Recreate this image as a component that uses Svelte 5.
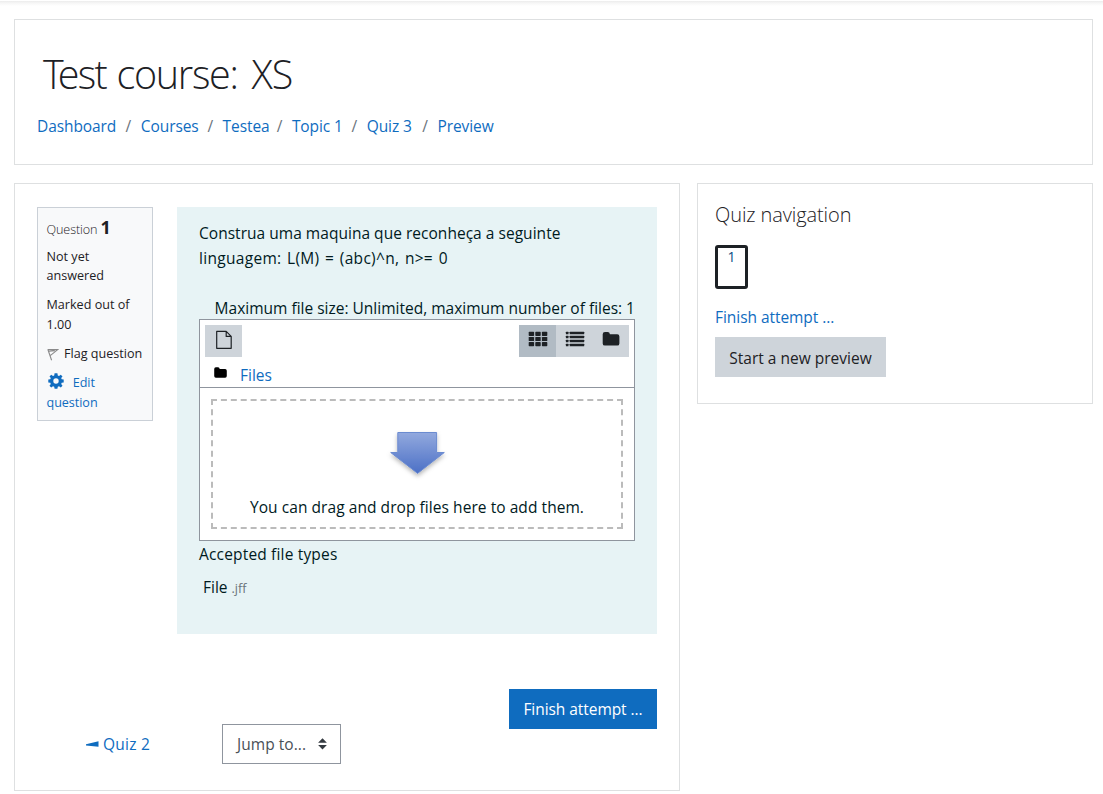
<script>
  const crumbs = [
    { label: 'Dashboard', w: 80 },
    { label: 'Courses', w: 58 },
    { label: 'Testea', w: 45.5 },
    { label: 'Topic 1', w: 51 },
    { label: 'Quiz 3', w: 47 },
    { label: 'Preview', w: 57 }
  ];
</script>

<div class="page">
  <div class="navline"></div>

  <header class="card head">
    <h1><span class="w1"><span class="cap">T</span>est</span> <span class="w2">course:</span> <span>XS</span></h1>
    <nav class="crumbs">
      {#each crumbs as c, i}
        {#if i > 0}<span class="sep">/</span>{/if}
        <a href="#top" style:width="{c.w}px">{c.label}</a>
      {/each}
    </nav>
  </header>

  <div class="cols">
    <main class="card main">
      <div class="que">
        <div class="info">
          <h3>Question <b>1</b></h3>
          <p class="state">Not yet<br />answered</p>
          <p class="grade">Marked out of<br />1.00</p>
          <p class="flag">
            <svg width="12" height="13" viewBox="0 0 12 13" fill="none" stroke="#8a8a8a" stroke-width="1.1">
              <path d="M.8 1.2 4.6 12.3M1 1.5 10.8 1.6 3.2 7.6M2 3.3 7.8 2.6" />
            </svg>
            <span>Flag question</span>
          </p>
          <a class="edit" href="#edit">
            <svg width="16" height="16" viewBox="-8 -8 16 16" fill="#0f6cbf">
              <path fill-rule="evenodd" d="M-1.4-7.7H1.4L1.8-5.6 3-5.1 4.8-6.3 6.5-4.6 5.2-2.9 5.7-1.7 7.7-1.4V1.4L5.7 1.8 5.2 3 6.5 4.8 4.8 6.5 3 5.2 1.8 5.7 1.4 7.7H-1.4L-1.8 5.7-3 5.2-4.8 6.5-6.5 4.8-5.2 3-5.7 1.8-7.7 1.4V-1.4L-5.7-1.7-5.2-2.9-6.5-4.6-4.8-6.3-3-5.1-1.8-5.6ZM0-2.7A2.7 2.7 0 1 0 0 2.7 2.7 2.7 0 1 0 0-2.7Z" />
            </svg>
            <span>Edit</span><br />question
          </a>
        </div>

        <section class="content">
          <p class="l1">Construa uma maquina que reconheça a seguinte</p>
          <p class="l2">linguagem: L(M) = (abc)^n, n&gt;= 0</p>
          <p class="limit">Maximum file size: Unlimited, maximum number of files: 1</p>

          <div class="manager">
            <div class="toolbar">
              <button class="tool" aria-label="Add">
                <svg width="18" height="20" viewBox="0 0 18 20" fill="none" stroke="#1d2125" stroke-width="1.2" stroke-linejoin="round">
                  <path d="M1.7 1.4H11.2L16.2 6.4V18.3H1.7ZM11.2 1.4V6.4H16.2" />
                </svg>
              </button>
              <div class="views">
                <button class="tool on" aria-label="Icons">
                  <svg width="20" height="16" viewBox="0 0 20 16" fill="#1d2125">
                    {#each [0, 1, 2] as r}
                      {#each [0, 1, 2] as c}
                        <rect x={0.7 + c * 6.6} y={0.8 + r * 5.1} width="5.4" height="4.2" rx=".7" />
                      {/each}
                    {/each}
                  </svg>
                </button>
                <button class="tool" aria-label="List">
                  <svg width="20" height="16" viewBox="0 0 20 16" fill="#1d2125">
                    {#each [0, 1, 2, 3] as r}
                      <rect x=".9" y={0.8 + r * 4} width="2.6" height="2.5" rx=".4" />
                      <rect x="4.7" y={0.8 + r * 4} width="14.5" height="2.5" rx=".4" />
                    {/each}
                  </svg>
                </button>
                <button class="tool tree" aria-label="Tree">
                  <svg width="18" height="16" viewBox="0 0 18 16" fill="#1d2125">
                    <path d="M.7 3.2Q.7.9 3 .9H5.6Q7.7.9 7.9 3.2H15.2Q17.4 3.2 17.4 5.4V12.4Q17.4 14.6 15.2 14.6H3Q.7 14.6.7 12.4Z" />
                  </svg>
                </button>
              </div>
            </div>
            <div class="path">
              <svg width="13" height="11" viewBox="0 0 18 15" fill="#000">
                <path d="M.3 2.8Q.3.4 2.6.4H5.6Q7.7.4 7.9 2.8H15.4Q17.7 2.8 17.7 5V12.3Q17.7 14.6 15.4 14.6H2.6Q.3 14.6.3 12.3Z" />
              </svg>
              <a href="#files">Files</a>
            </div>
            <div class="dropwrap">
              <div class="drop">
                <svg width="64" height="52" viewBox="0 0 64 52">
                  <defs>
                    <linearGradient id="arrow" x1="0" y1="0" x2="0" y2="1">
                      <stop offset="0" stop-color="#92a9de" />
                      <stop offset="1" stop-color="#4c70c6" />
                    </linearGradient>
                    <filter id="shade" x="-20%" y="-20%" width="140%" height="150%">
                      <feDropShadow dx="0" dy="2.5" stdDeviation="2" flood-color="#000" flood-opacity=".28" />
                    </filter>
                  </defs>
                  <path d="M12.8 2.5H51.6V22.5H59.3L32.6 43.4 5.7 22.5H12.8Z" fill="url(#arrow)" stroke="#6b8bd0" stroke-width="1" filter="url(#shade)" />
                </svg>
                <p>You can drag and drop files here to add them.</p>
              </div>
            </div>
          </div>

          <p class="accepted">Accepted file types</p>
          <p class="ftype">File <small>.jff</small></p>
        </section>
      </div>

      <div class="submit"><button class="primary">Finish attempt ...</button></div>

      <div class="activity">
        <a class="prev" href="#prev">
          <svg width="13" height="6" viewBox="0 0 13 6" fill="#0f6cbf"><path d="M0 3.3 12.5.3V5.7L0 4.5Z" /></svg>
          <span>Quiz 2</span>
        </a>
        <div class="jump">
          <span>Jump to...</span>
          <svg width="9" height="12" viewBox="0 0 9 12" fill="#343a40"><path d="M4.5 .3 8.9 4.8H.1ZM4.5 11.5 8.9 7H.1Z" /></svg>
        </div>
      </div>
    </main>

    <aside class="card side">
      <h5>Quiz navigation</h5>
      <a class="qn" href="#q1">1</a>
      <a class="finish" href="#finish">Finish attempt ...</a>
      <button class="secondary">Start a new preview</button>
    </aside>
  </div>
</div>

<style>
  :global(body) { background: #fff; overflow: hidden; }
  .page {
    box-sizing: border-box;
    width: 1103px;
    height: 794px;
    padding: 0 10px 0 14px;
    font: 400 15.5px/25px 'Open Sans', 'Noto Sans', sans-serif;
    letter-spacing: 0;
    color: #1d2125;
    white-space: nowrap;
  }
  .page * { box-sizing: border-box; }
  h1, h3, h5, p { margin: 0; font-weight: 400; }
  a { color: #0f6cbf; text-decoration: none; }
  button { font: inherit; letter-spacing: inherit; color: inherit; border: 0; padding: 0; }
  svg { display: block; }

  .navline { height: 19px; margin: 0 -10px 0 -14px; background: linear-gradient(#fff 1px, #ececec 1px, #f6f6f6 3px, #fff 6px); }
  .card { border: 1px solid #dee0e1; background: #fff; }
  .head { height: 146px; padding: 30px 22px 0; }
  h1 { display: flex; font-size: 39.5px; font-weight: 300; line-height: 48px; letter-spacing: -1px; padding-left: 6px; }
  .w1 { width: 73.5px; letter-spacing: -1.7px; }
  .cap { letter-spacing: -6px; }
  .w2 { width: 135px; letter-spacing: -1.3px; }
  .crumbs { display: flex; margin-top: 16px; letter-spacing: -0.08px; }
  .sep { width: 23.8px; padding-right: 1px; text-align: center; color: #6a737b; }

  .cols { display: flex; gap: 17px; align-items: flex-start; margin-top: 18px; }
  .main { width: 666px; height: 608px; padding: 23px 22px 0; }
  .que { display: flex; gap: 24px; align-items: flex-start; }

  .info {
    width: 116px;
    height: 214px;
    padding: 6px 0 0 8.5px;
    border: 1px solid #cad0d7;
    background: #f8f9fa;
    font-size: 12.6px;
    line-height: 20px;
    letter-spacing: 0;
  }
  h3 { font-size: 12.6px; line-height: 26px; font-weight: 300; letter-spacing: -0.1px; }
  h3 b { font-size: 18px; font-weight: 700; }
  .state { line-height: 19px; margin-top: 4px; }
  .grade { margin-top: 10px; }
  .flag { display: flex; gap: 5.5px; margin-top: 9px; }
  .flag svg { margin-top: 4px; }
  .edit { display: block; margin-top: 9px; letter-spacing: -0.05px; }
  .edit svg { display: inline-block; vertical-align: -2px; margin: -4px 6px 0 1px; }

  .content { width: 480px; height: 427px; padding: 14px 22px 0; background: #e7f3f5; color: #001a1e; }
  .l1 { letter-spacing: 0.03px; }
  .l2 { letter-spacing: 0.3px; word-spacing: 1.3px; }
  .limit { margin-top: 25px; text-align: right; }
  .manager { height: 222px; margin-top: -2px; border: 1px solid #8f959e; background: #fff; }
  .toolbar { display: flex; justify-content: space-between; padding: 5px 5px 0; }
  .tool { display: flex; justify-content: center; width: 37px; height: 32px; padding: 6px 0 0 2px; background: #ced4da; }
  .toolbar > .tool { padding: 5px 0 0; }
  .views { display: flex; width: 110px; }
  .views > .tree { padding-left: 0; }
  .on { background: #b1bbc4; }
  .path { display: flex; align-items: flex-start; gap: 13px; height: 31px; padding: 6px 0 0 14px; border-bottom: 1px solid #8f959e; }
  .path svg { margin-top: 4px; }
  .dropwrap { padding: 11px; }
  .drop { height: 130px; border: 2px dashed #bbb; padding-top: 29px; text-align: center; letter-spacing: 0.06px; }
  .drop svg { margin: 0 auto; }
  .drop p { margin-top: 13px; }
  .accepted { margin-top: 1px; letter-spacing: 0.17px; }
  .ftype { margin-top: 8px; padding-left: 4px; }
  small { font-size: 12.6px; color: #6a737b; }

  .submit { display: flex; justify-content: flex-end; margin-top: 55px; }
  .primary { width: 148px; height: 40px; background: #0f6cbf; color: #fff; letter-spacing: -0.06px; }
  .activity { display: flex; align-items: center; margin-top: -5px; }
  .prev { display: flex; align-items: center; gap: 4px; width: 136px; margin-left: 49px; letter-spacing: 0.25px; }
  .jump { display: flex; align-items: center; justify-content: space-between; width: 119px; height: 40px; padding: 0 13px 0 14px; border: 1px solid #8f959e; color: #495057; letter-spacing: 0.05px; }

  .side { width: 396px; height: 221px; padding: 18px 17px 0; display: flex; flex-direction: column; align-items: flex-start; }
  h5 { font-size: 20px; font-weight: 300; line-height: 26px; letter-spacing: -0.1px; }
  .qn { width: 33px; height: 44px; margin-top: 17px; border: 3px solid #1d2125; border-radius: 3px; font-size: 14px; line-height: 18px; text-align: center; color: #0d4b85; }
  .finish { margin-top: 16px; letter-spacing: -0.05px; }
  .secondary { width: 171px; height: 40px; margin-top: 7px; padding-top: 2px; background: #ced4da; }
</style>
